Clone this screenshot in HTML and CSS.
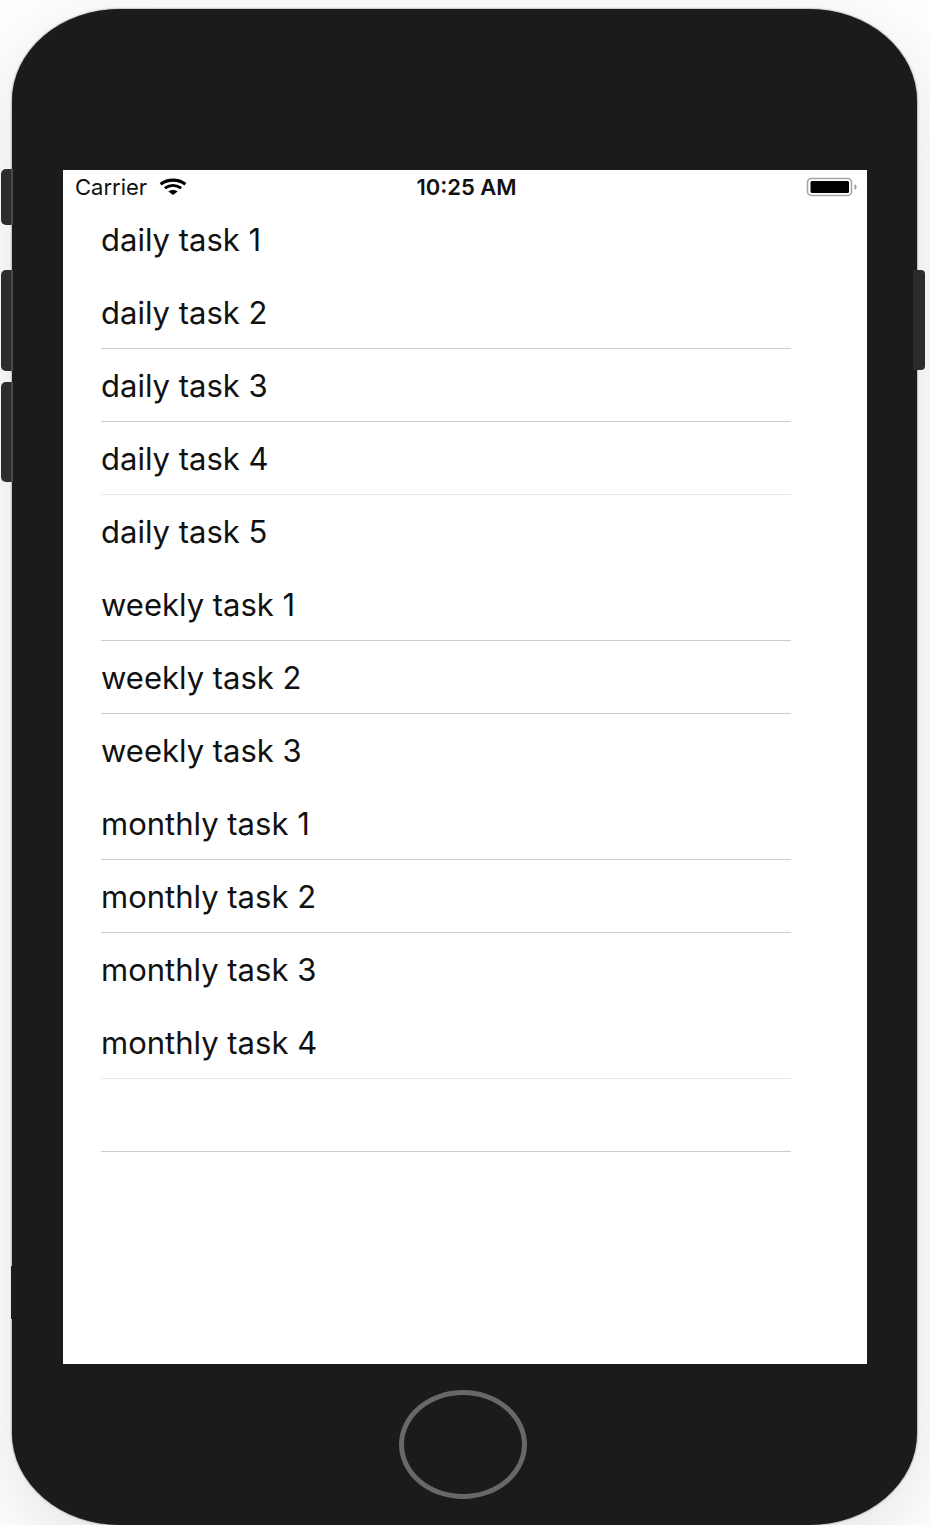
FILE: index.html
```html
<!DOCTYPE html>
<html lang="en">
<head>
<meta charset="utf-8">
<meta name="viewport" content="width=device-width, initial-scale=1">
<title>Tasks</title>
<link rel="stylesheet" href="styles.css">
</head>
<body>
<div class="phone">
  <span class="side-key mute"></span>
  <span class="side-key volume-up"></span>
  <span class="side-key volume-down"></span>
  <span class="side-key power"></span>
  <span class="antenna"></span>
  <main class="screen">
    <header class="status-bar">
      <div class="carrier">
        <span>Carrier</span>
        <svg class="wifi" viewBox="0 0 28 18" aria-hidden="true">
          <path d="M1.6 6.2C9 .8 19 .8 26.4 6.2" fill="none" stroke="#000" stroke-width="3.2"/>
          <path d="M5.8 10.2C11 6.6 17 6.6 22.2 10.2" fill="none" stroke="#000" stroke-width="2.8"/>
          <path d="M9.4 13.4Q14 10.6 18.6 13.4L14 17Z" fill="#000"/>
        </svg>
      </div>
      <time class="clock">10:25 AM</time>
      <svg class="battery" viewBox="0 0 52 20" aria-hidden="true">
        <rect x="1.5" y="1.5" width="44" height="17" rx="4" fill="#fff" stroke="#a6a6a6" stroke-width="1.6"/>
        <rect x="4.5" y="4" width="38.5" height="12" rx="1.5" fill="#000"/>
        <path d="M48.5 7.5H49.5Q50.5 8 50.5 10T49.5 12.5H48.5Z" fill="#999"/>
      </svg>
    </header>
    <ul class="tasks">
      <li class="task">daily task 1</li>
      <li class="task ruled">daily task 2</li>
      <li class="task ruled">daily task 3</li>
      <li class="task ruled faint">daily task 4</li>
      <li class="task">daily task 5</li>
      <li class="task ruled">weekly task 1</li>
      <li class="task ruled">weekly task 2</li>
      <li class="task">weekly task 3</li>
      <li class="task ruled">monthly task 1</li>
      <li class="task ruled">monthly task 2</li>
      <li class="task">monthly task 3</li>
      <li class="task ruled faint">monthly task 4</li>
      <li class="task ruled"></li>
    </ul>
  </main>
  <div class="chin">
    <button class="home" type="button" aria-label="Home"></button>
  </div>
</div>
</body>
</html>
```
FILE: styles.css
```css
* {
  box-sizing: border-box;
}

body {
  margin: 0;
  padding: 9px 13px 0 12px;
  min-height: 100vh;
  display: flex;
  background: #fff;
  font-family: Inter, "Liberation Sans", sans-serif;
  color: #111;
  overflow-x: hidden;
}

.phone {
  position: relative;
  flex: 1;
  display: flex;
  flex-direction: column;
  padding: 161px 50px 0 51px;
  background: #1b1b1b;
  border-radius: 108px / 92px;
  box-shadow: 0 20px 80px rgba(0, 0, 0, 0.12), 0 0 2px #555;
}

.side-key {
  position: absolute;
  left: -11px;
  width: 12px;
  background: #2c2c2c;
  border-right: 2px solid #484848;
  border-radius: 5px 0 0 5px;
}

.mute {
  top: 160px;
  height: 56px;
}

.volume-up {
  top: 261px;
  height: 101px;
}

.volume-down {
  top: 373px;
  height: 100px;
}

.power {
  top: 261px;
  left: auto;
  right: -8px;
  height: 100px;
  border-right: 0;
  border-radius: 0 4px 4px 0;
}

.antenna {
  position: absolute;
  left: -1px;
  top: 1257px;
  width: 2px;
  height: 53px;
  background: #1b1b1b;
}

.screen {
  flex: 1;
  background: #fff;
}

.status-bar {
  display: grid;
  grid-template-columns: 1fr auto 1fr;
  align-items: center;
  height: 33px;
  padding: 0 9px 0 12px;
  font-size: 22px;
  line-height: 24px;
}

.carrier {
  display: flex;
  align-items: center;
  gap: 12px;
}

.wifi {
  width: 28px;
  height: 18px;
}

.clock {
  font-weight: 600;
}

.battery {
  justify-self: end;
  width: 52px;
  height: 20px;
}

.tasks {
  margin: 0;
  padding: 0 76px 0 38px;
  list-style: none;
}

.task {
  display: flex;
  align-items: center;
  height: 73px;
  padding-top: 1px;
  border-bottom: 1px solid transparent;
  font-size: 31px;
  line-height: 36px;
}

.ruled {
  border-color: #ccc;
}

.faint {
  border-color: #e8e8e8;
}

.chin {
  display: flex;
  justify-content: center;
  padding: 26px 4px 26px 0;
}

.home {
  width: 128px;
  height: 109px;
  padding: 0;
  border: 5px solid #686868;
  border-radius: 50%;
  background: transparent;
}
```
